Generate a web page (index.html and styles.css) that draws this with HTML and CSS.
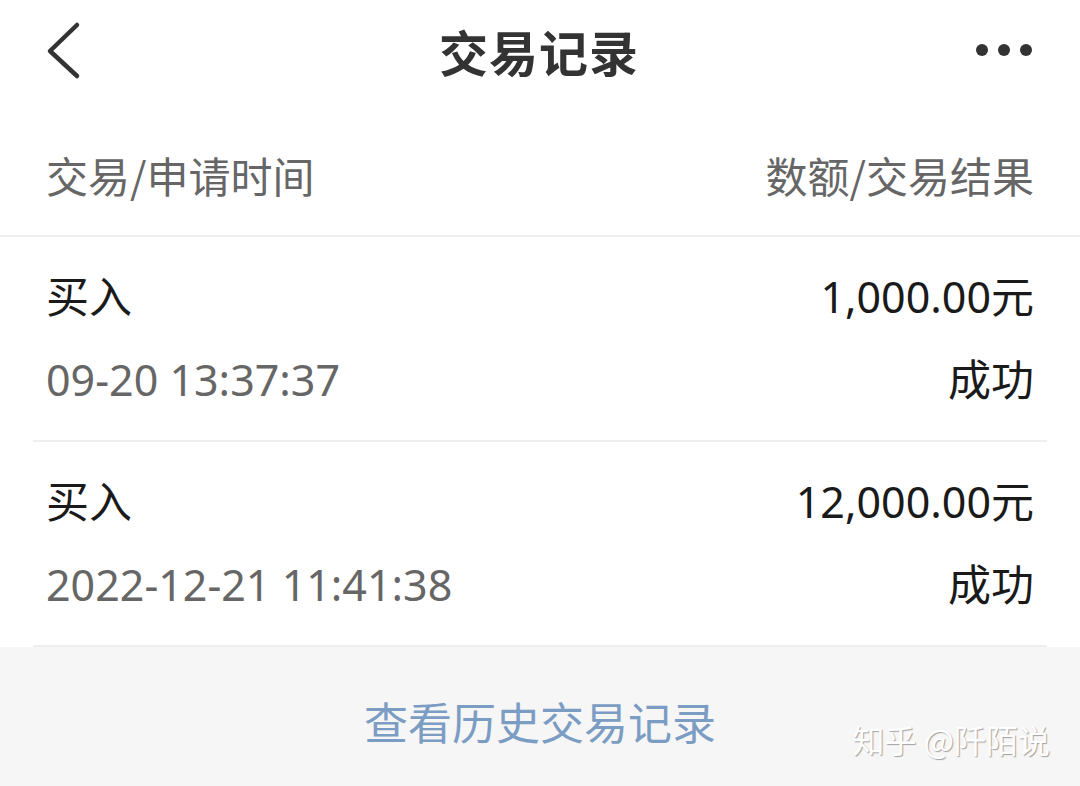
FILE: index.html
```html
<!DOCTYPE html>
<html lang="zh-CN">
<head>
    <meta charset="UTF-8">
    <meta name="viewport" content="width=device-width, initial-scale=1.0">
    <title>交易记录</title>
    <link rel="stylesheet" href="styles.css">
</head>
<body>
    <header class="topbar">
        <a class="back" href="#">
            <svg width="40" height="60" viewBox="0 0 40 60">
                <polyline points="31,5 4,31 31,56" fill="none" stroke="#333" stroke-width="4.5" stroke-linecap="round" stroke-linejoin="round"/>
            </svg>
        </a>
        <h1>交易记录</h1>
        <a class="more" href="#">
            <span></span><span></span><span></span>
        </a>
    </header>

    <div class="colhead">
        <span>交易/申请时间</span>
        <span>数额/交易结果</span>
    </div>

    <div class="list">
        <div class="row">
            <div class="line">
                <span class="type">买入</span>
                <span class="amount">1,000.00元</span>
            </div>
            <div class="line">
                <span class="time">09-20 13:37:37</span>
                <span class="status">成功</span>
            </div>
        </div>
        <div class="row">
            <div class="line">
                <span class="type">买入</span>
                <span class="amount">12,000.00元</span>
            </div>
            <div class="line">
                <span class="time">2022-12-21 11:41:38</span>
                <span class="status">成功</span>
            </div>
        </div>
    </div>

    <footer>
        <a href="#" class="history">查看历史交易记录</a>
        <span class="watermark">知乎 @阡陌说</span>
    </footer>
</body>
</html>
```

FILE: styles.css
```css
* {
    margin: 0;
    padding: 0;
    box-sizing: border-box;
}

body {
    font-family: "Noto Sans CJK SC", "Noto Sans", sans-serif;
    background: #fff;
    color: #222;
    display: flex;
    flex-direction: column;
    min-height: 100vh;
}

a {
    text-decoration: none;
}

.topbar {
    height: 100px;
    padding: 0 48px 0 46px;
    display: flex;
    align-items: center;
    justify-content: space-between;
}

.back {
    display: flex;
    width: 60px;
}

.topbar h1 {
    font-size: 49px;
    font-weight: bold;
    color: #333;
    letter-spacing: 1px;
}

.more {
    width: 60px;
    display: flex;
    justify-content: flex-end;
    gap: 10px;
}

.more span {
    width: 12px;
    height: 12px;
    border-radius: 50%;
    background: #333;
}

.colhead {
    padding: 47px 46px 33px;
    display: flex;
    justify-content: space-between;
    font-size: 42px;
    line-height: 55px;
    color: #666;
    border-bottom: 2px solid #eeeeee;
}

.list {
    margin: 0 33px;
}

.row {
    padding: 18px 13px 19px;
    border-bottom: 2px solid #eeeeee;
}

.line {
    display: flex;
    justify-content: space-between;
    font-family: "Noto Sans", "Noto Sans CJK SC", sans-serif;
    font-size: 43px;
    line-height: 83px;
}

.type,
.amount,
.status {
    color: #1a1a1a;
}

.time {
    color: #666;
}

footer {
    flex: 1;
    background: #f6f6f6;
    position: relative;
    text-align: center;
    padding-top: 44px;
}

.history {
    font-size: 44px;
    line-height: 60px;
    color: #7b9cc3;
}

.watermark {
    position: absolute;
    right: 30px;
    bottom: 24px;
    font-size: 32px;
    color: #fff;
    text-shadow: 1px 1px 1px rgba(0, 0, 0, 0.35);
}
```
